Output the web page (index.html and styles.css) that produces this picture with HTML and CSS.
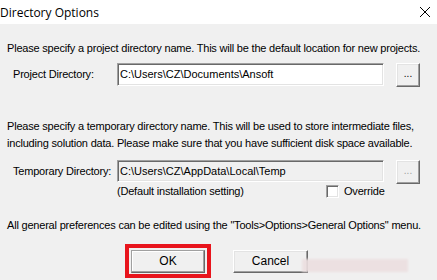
FILE: index.html
```html
<!DOCTYPE html>
<html>
<head>
<meta charset="utf-8">
<link rel="stylesheet" href="styles.css">
</head>
<body>
<div class="dialog">
  <div class="titlebar">
    <span class="title">Directory Options</span>
    <svg class="close" width="12" height="12" viewBox="0 0 12 12"><path d="M1 1 L11 11 M11 1 L1 11" stroke="#000" stroke-width="1" fill="none"/></svg>
  </div>
  <div class="content">
    <p class="msg m1">Please specify a project directory name. This will be the default location for new projects.</p>
    <div class="row r1">
      <span class="label">Project Directory:</span>
      <div class="edit">C:\Users\CZ\Documents\Ansoft</div>
      <div class="btn browse">...</div>
    </div>
    <p class="msg m2">Please specify a temporary directory name. This will be used to store intermediate files,<br>including solution data. Please make sure that you have sufficient disk space available.</p>
    <div class="row r2">
      <span class="label">Temporary Directory:</span>
      <div class="edit disabled">C:\Users\CZ\AppData\Local\Temp</div>
      <div class="btn browse dim">...</div>
    </div>
    <div class="subrow">
      <span class="note">(Default installation setting)</span>
      <span class="check"></span>
      <span class="checklabel">Override</span>
    </div>
    <p class="msg m4">All general preferences can be edited using the "Tools&gt;Options&gt;General Options" menu.</p>
    <div class="buttons">
      <div class="focus"><div class="btn push default">OK</div></div>
      <div class="btn push cancel">Cancel</div>
    </div>
  </div>
  <div class="watermark"></div>
</div>
</body>
</html>
```
FILE: styles.css
```css
html, body {
  margin: 0;
  padding: 0;
}
body {
  width: 437px;
  height: 280px;
  overflow: hidden;
  background: #f0f0f0;
}
.dialog {
  position: relative;
  width: 437px;
  height: 280px;
  font-family: "Liberation Sans", Arial, sans-serif;
  font-size: 11px;
  letter-spacing: -0.2px;
  color: #000;
}
.titlebar {
  height: 24px;
  background: #fff;
  display: flex;
  align-items: center;
  justify-content: space-between;
  padding-right: 6px;
  letter-spacing: 0;
}
.title {
  font-family: "Open Sans", "Noto Sans", sans-serif;
  font-size: 12px;
  color: #000;
}
.close {
  display: block;
}
.content {
  padding-left: 7px;
}
.msg {
  margin: 0;
  line-height: 13px;
  white-space: nowrap;
}
.m1 {
  margin-top: 18px;
}
.row {
  display: flex;
  align-items: flex-start;
  height: 24px;
  margin-top: 8px;
}
.label {
  margin-left: 6px;
  width: 104px;
  line-height: 23px;
}
.edit {
  box-sizing: border-box;
  width: 267px;
  height: 23px;
  background: #fff;
  border-style: solid;
  border-width: 1px;
  border-color: #a0a0a0 #fff #fff #a0a0a0;
  box-shadow: inset 1px 1px 0 #696969, inset -1px -1px 0 #e3e3e3;
  padding-left: 2px;
  line-height: 21px;
  letter-spacing: 0;
  white-space: nowrap;
}
.edit.disabled {
  background: #f0f0f0;
}
.btn {
  box-sizing: border-box;
  background: #f0f0f0;
  border-style: solid;
  border-width: 1px;
  border-color: #fff #696969 #696969 #fff;
  box-shadow: inset -1px -1px 0 #a0a0a0, inset 1px 1px 0 #e3e3e3;
  text-align: center;
}
.browse {
  width: 24px;
  height: 24px;
  margin-left: 12px;
  line-height: 20px;
  font-size: 10px;
  letter-spacing: 0;
}
.browse.dim {
  color: #a0a0a0;
}
.m2 {
  margin-top: 31px;
  line-height: 17px;
}
.r2 {
  margin-top: 8px;
}
.r2 .edit {
  height: 22px;
  line-height: 20px;
}
.subrow {
  display: flex;
  align-items: center;
  height: 14px;
  padding-left: 110px;
}
.note {
  width: 209px;
  line-height: 14px;
}
.check {
  box-sizing: border-box;
  width: 13px;
  height: 13px;
  background: #fff;
  border-style: solid;
  border-width: 1px;
  border-color: #a0a0a0 #fff #fff #a0a0a0;
  box-shadow: inset 1px 1px 0 #696969, inset -1px -1px 0 #e3e3e3;
}
.checklabel {
  margin-left: 5px;
  line-height: 14px;
}
.m4 {
  margin-top: 21px;
}
.buttons {
  display: flex;
  align-items: flex-start;
  margin-top: 12px;
  padding-left: 118px;
}
.focus {
  border: 4px solid #e8141c;
  padding: 2px 2px 1px 2px;
}
.push {
  width: 74px;
  height: 23px;
  line-height: 21px;
  font-size: 12px;
  letter-spacing: 0;
}
.default {
  border-color: #a0a0a0 #696969 #696969 #a0a0a0;
  box-shadow: inset -1px -1px 0 #a0a0a0, inset 1px 1px 0 #fff;
}
.cancel {
  margin-left: 22px;
  margin-top: 6px;
  width: 75px;
}
.watermark {
  position: absolute;
  left: 302px;
  top: 259px;
  width: 106px;
  height: 13px;
  background: #ecdfe0;
  filter: blur(1px);
  opacity: 0.9;
}
```
